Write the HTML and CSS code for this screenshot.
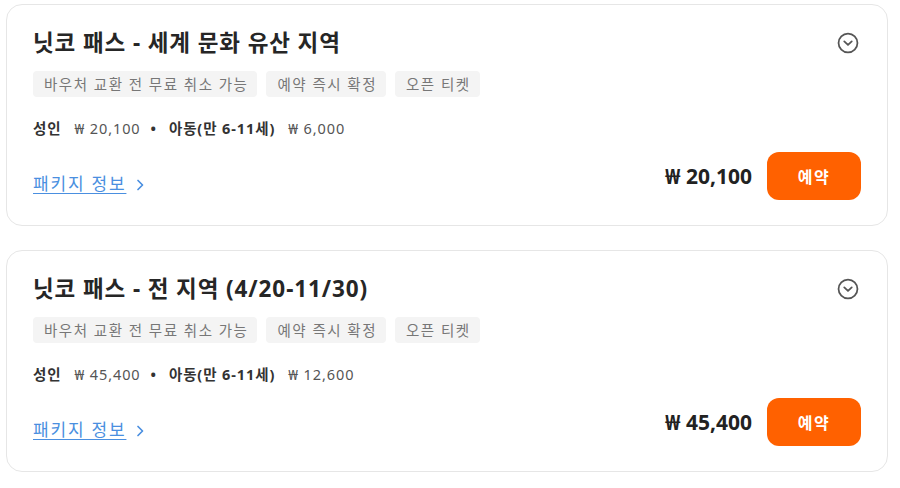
FILE: index.html
```html
<!DOCTYPE html>
<html lang="ko">
<head>
<meta charset="utf-8">
<link rel="stylesheet" href="styles.css">
</head>
<body>
<div class="list">
  <div class="card">
    <div class="head">
      <h2 class="title">닛코 패스 - 세계 문화 유산 지역</h2>
      <svg class="toggle" viewBox="0 0 20 20" width="22" height="22"><circle cx="10" cy="10" r="8.6" fill="none" stroke="#555" stroke-width="1.6"/><path d="M6.6 8.6 L10 11.8 L13.4 8.6" fill="none" stroke="#555" stroke-width="1.6" stroke-linecap="round" stroke-linejoin="round"/></svg>
    </div>
    <div class="tags">
      <span class="tag">바우처 교환 전 무료 취소 가능</span>
      <span class="tag">예약 즉시 확정</span>
      <span class="tag">오픈 티켓</span>
    </div>
    <div class="prices">
      <span class="who">성인</span><span class="amt">₩ 20,100</span><span class="dot">•</span><span class="who">아동(만 6-11세)</span><span class="amt">₩ 6,000</span>
    </div>
    <div class="foot">
      <a class="more" href="#">패키지 정보</a><svg class="arrow" viewBox="0 0 10 14" width="10" height="14"><path d="M3 2.5 L7.5 7 L3 11.5" fill="none" stroke="#4a8fe0" stroke-width="1.7" stroke-linecap="round" stroke-linejoin="round"/></svg>
      <div class="buy">
        <span class="total">₩ 20,100</span>
        <button class="btn">예약</button>
      </div>
    </div>
  </div>
  <div class="card">
    <div class="head">
      <h2 class="title">닛코 패스 - 전 지역 (4/20-11/30)</h2>
      <svg class="toggle" viewBox="0 0 20 20" width="22" height="22"><circle cx="10" cy="10" r="8.6" fill="none" stroke="#555" stroke-width="1.6"/><path d="M6.6 8.6 L10 11.8 L13.4 8.6" fill="none" stroke="#555" stroke-width="1.6" stroke-linecap="round" stroke-linejoin="round"/></svg>
    </div>
    <div class="tags">
      <span class="tag">바우처 교환 전 무료 취소 가능</span>
      <span class="tag">예약 즉시 확정</span>
      <span class="tag">오픈 티켓</span>
    </div>
    <div class="prices">
      <span class="who">성인</span><span class="amt">₩ 45,400</span><span class="dot">•</span><span class="who">아동(만 6-11세)</span><span class="amt">₩ 12,600</span>
    </div>
    <div class="foot">
      <a class="more" href="#">패키지 정보</a><svg class="arrow" viewBox="0 0 10 14" width="10" height="14"><path d="M3 2.5 L7.5 7 L3 11.5" fill="none" stroke="#4a8fe0" stroke-width="1.7" stroke-linecap="round" stroke-linejoin="round"/></svg>
      <div class="buy">
        <span class="total">₩ 45,400</span>
        <button class="btn">예약</button>
      </div>
    </div>
  </div>
</div>
</body>
</html>
```
FILE: styles.css
```css
html, body {
  margin: 0;
  padding: 0;
  background: #fff;
}
body {
  font-family: "Noto Sans", "Noto Sans CJK KR", sans-serif;
  color: #222;
}
.list {
  display: flex;
  flex-direction: column;
  gap: 24px;
  padding: 4px 12px 0 6px;
}
.card {
  border: 1px solid #e6e6e6;
  border-radius: 16px;
  padding: 22px 26px 25px 26px;
  height: 222px;
  box-sizing: border-box;
  display: flex;
  flex-direction: column;
}
.head {
  display: flex;
  justify-content: space-between;
  align-items: center;
}
.title {
  margin: 0;
  font-size: 22.5px;
  font-weight: 700;
  line-height: 32px;
  letter-spacing: 0.9px;
  color: #262626;
}
.toggle {
  margin-right: 2px;
}
.tags {
  display: flex;
  gap: 9px;
  margin-top: 12px;
}
.tag {
  background: #f4f4f4;
  color: #777;
  font-size: 14.5px;
  line-height: 26px;
  letter-spacing: 1.5px;
  padding: 0 9px 0 11px;
  border-radius: 4px;
}
.prices {
  margin-top: 21px;
  font-size: 14.5px;
  line-height: 20px;
  letter-spacing: 0.9px;
  display: flex;
  align-items: center;
}
.who {
  font-weight: 700;
  color: #333;
}
.amt {
  color: #555;
  margin-left: 13px;
}
.dot {
  margin: 0 12px 0 10px;
  color: #333;
  font-weight: 700;
}
.foot {
  margin-top: auto;
  display: flex;
  align-items: center;
}
.more {
  color: #4a8fe0;
  font-size: 17px;
  line-height: 24px;
  letter-spacing: 1.8px;
  text-decoration: underline;
  text-underline-offset: 3px;
  margin-top: 16px;
}
.arrow {
  margin-left: 9px;
  margin-top: 18px;
}
.buy {
  margin-left: auto;
  display: flex;
  align-items: center;
  gap: 15px;
}
.total {
  font-size: 21px;
  font-weight: 700;
  color: #222;
}
.btn {
  width: 94px;
  height: 48px;
  border: none;
  border-radius: 12px;
  background: #ff6100;
  color: #fff;
  font-family: "Noto Sans CJK KR", sans-serif;
  font-size: 16px;
  letter-spacing: 1.5px;
  font-weight: 700;
}
```
